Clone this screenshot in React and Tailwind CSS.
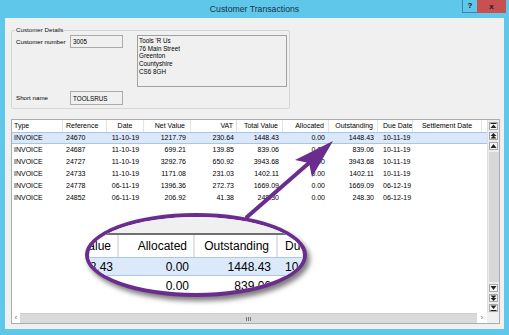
import React from "react";

const cols = [
    { label: "Type", cls: "w-[51px] pl-[2px] text-left" },
    { label: "Reference", cls: "w-[44px] pl-[3px] text-left" },
    { label: "Date", cls: "w-[37px] text-center" },
    { label: "Net Value", cls: "w-[47px] pr-[5px] text-right" },
    { label: "VAT", cls: "w-[46px] pr-[3px] text-right" },
    { label: "Total Value", cls: "w-[46px] pr-[4px] text-right" },
    { label: "Allocated", cls: "w-[46px] pr-[4px] text-right" },
    { label: "Outstanding", cls: "w-[49px] pr-[4px] text-right" },
    { label: "Due Date", cls: "w-[35px] pl-[5px] text-left" },
    { label: "Settlement Date", cls: "w-[69px] text-center" },
];

const rows = [
    ["INVOICE", "24670", "11-10-19", "1217.79", "230.64", "1448.43", "0.00", "1448.43", "10-11-19", ""],
    ["INVOICE", "24687", "11-10-19", "699.21", "139.85", "839.06", "0.00", "839.06", "10-11-19", ""],
    ["INVOICE", "24727", "11-10-19", "3292.76", "650.92", "3943.68", "0.00", "3943.68", "10-11-19", ""],
    ["INVOICE", "24733", "11-10-19", "1171.08", "231.03", "1402.11", "0.00", "1402.11", "10-11-19", ""],
    ["INVOICE", "24778", "06-11-19", "1396.36", "272.73", "1669.09", "0.00", "1669.09", "06-12-19", ""],
    ["INVOICE", "24852", "06-11-19", "206.92", "41.38", "248.30", "0.00", "248.30", "06-12-19", ""],
];

// scrollbar arrow glyphs
const Glyph = ({ kind }) => (
    <svg width="7" height="6" viewBox="0 0 7 6">
        {kind === "top" && (<><rect x="0.5" y="0" width="6" height="1" fill="#222" /><polygon points="3.5,1.5 6.5,5 0.5,5" fill="#222" /></>)}
        {kind === "pgup" && (<><polygon points="3.5,0 6.5,3 0.5,3" fill="#222" /><polygon points="3.5,2.5 6.5,5.5 0.5,5.5" fill="#222" /></>)}
        {kind === "up" && <polygon points="3.5,1 6.5,5 0.5,5" fill="#222" />}
        {kind === "down" && <polygon points="0.5,1 6.5,1 3.5,5" fill="#222" />}
        {kind === "pgdn" && (<><polygon points="0.5,0.5 6.5,0.5 3.5,3.5" fill="#222" /><polygon points="0.5,3 6.5,3 3.5,6" fill="#222" /></>)}
        {kind === "bottom" && (<><polygon points="0.5,0.5 6.5,0.5 3.5,4" fill="#222" /><rect x="0.5" y="5" width="6" height="1" fill="#222" /></>)}
    </svg>
);

const ScrollBtn = ({ kind }) => (
    <div className="w-[9px] h-[8px] border border-[#a8a8a8] bg-[#f4f4f4] flex items-center justify-center">
        <Glyph kind={kind} />
    </div>
);

const App = () => {
    return (
        <div className="w-[509px] h-[335px] bg-[#5fc7ea] relative overflow-hidden flex flex-col font-['Liberation_Sans',Arial,sans-serif] text-black">

            {/* Title bar */}
            <div className="h-[18px] grid grid-cols-[1fr_auto_1fr] shrink-0">
                <div />
                <div className="leading-[18px] text-[8.7px] text-[#1d3246]">Customer Transactions</div>
                <div className="flex justify-end items-start pr-[3px]">
                    <div className="w-[15px] h-[13px] border-l border-b border-[#3a86a8] flex items-center justify-center text-[8px] font-bold text-[#111]">?</div>
                    <div className="w-[29px] h-[13px] bg-[#c75050] flex items-center justify-center text-[8px] font-bold text-[#1a1a1a]">x</div>
                </div>
            </div>

            {/* Client area */}
            <div className="mx-[5px] h-[311px] bg-[#f0f0f0] flex flex-col pl-[6px] pr-[4px]">

                {/* Customer details group */}
                <fieldset className="mt-[8px] w-[279px] h-[83px] border border-[#d6d6d6] rounded-[2px]">
                    <legend className="ml-[3px] px-[1px] text-[6.2px] leading-[8px] text-[#111]">Customer Details</legend>
                    <div className="pl-[4px] pt-[1px] flex flex-col">
                        <div className="flex items-start">
                            <div className="flex items-center">
                                <span className="w-[54px] text-[6.2px]">Customer number</span>
                                <div className="w-[53px] h-[13px] border border-[#ababab] px-[2px] pt-[1px] text-[6.3px] leading-[10px]">3005</div>
                            </div>
                            <div className="ml-[14px] w-[150px] h-[52px] border border-[#a0a0a0] pl-[1px] pt-[1px] text-[6.3px] leading-[7.7px]">
                                <div>Tools 'R Us</div>
                                <div>76 Main Street</div>
                                <div>Greenton</div>
                                <div>Countyshire</div>
                                <div>CS6 8GH</div>
                            </div>
                        </div>
                        <div className="flex items-center mt-[4px]">
                            <span className="w-[54px] text-[6.2px]">Short name</span>
                            <div className="w-[53px] h-[14px] border border-[#ababab] px-[2px] pt-[1px] text-[6.3px] leading-[11px]">TOOLSRUS</div>
                        </div>
                    </div>
                </fieldset>

                {/* Transactions list */}
                <div className="mt-[10px] w-[489px] h-[205px] border border-[#adadad] bg-white flex flex-col text-[7px]">
                    <div className="flex flex-1 min-h-0">
                        <div className="flex-1 flex flex-col">
                            <div className="flex h-[12px]">
                                {cols.map((c) => (
                                    <div key={c.label} className={`${c.cls} shrink-0 h-full leading-[12px] whitespace-nowrap overflow-hidden border-r border-[#e3e3e3]`}>
                                        {c.label}
                                    </div>
                                ))}
                            </div>
                            {rows.map((r, i) => (
                                <div key={r[1]} className={`flex h-[12px] ${i === 0 ? "bg-[#dbe8fa] border-y border-[#a6c4ec]" : ""}`}>
                                    {cols.map((c, j) => (
                                        <div key={c.label} className={`${c.cls} shrink-0 whitespace-nowrap overflow-hidden ${i === 0 ? "leading-[10px]" : "leading-[12px]"}`}>
                                            {r[j]}
                                        </div>
                                    ))}
                                </div>
                            ))}
                        </div>

                        {/* Vertical scrollbar */}
                        <div className="w-[12px] bg-[#ececec] border-l border-[#dddddd] flex flex-col items-center">
                            <div className="pt-[2px] flex flex-col gap-[2px]">
                                <ScrollBtn kind="top" />
                                <ScrollBtn kind="pgup" />
                                <ScrollBtn kind="up" />
                            </div>
                            <div className="flex-1 w-[10px] bg-[#d8d8d8] my-[2px]" />
                            <div className="pb-[1px] flex flex-col gap-[2px]">
                                <ScrollBtn kind="down" />
                                <ScrollBtn kind="pgdn" />
                                <ScrollBtn kind="bottom" />
                            </div>
                        </div>
                    </div>

                    {/* Horizontal scrollbar */}
                    <div className="flex h-[10px]">
                        <div className="w-[8px] bg-white flex items-center justify-center text-[7px] text-[#555]">‹</div>
                        <div className="flex-1 bg-[#dadada] border-t border-[#cdcdcd] flex items-center justify-center">
                            <div className="flex gap-[1px]">
                                <div className="w-[1px] h-[4px] bg-[#777]" />
                                <div className="w-[1px] h-[4px] bg-[#777]" />
                                <div className="w-[1px] h-[4px] bg-[#777]" />
                            </div>
                        </div>
                        <div className="w-[10px] bg-white flex items-center justify-center text-[7px] text-[#555]">›</div>
                        <div className="w-[12px] bg-[#f0f0f0]" />
                    </div>
                </div>
            </div>

            {/* Magnifier callout */}
            <div className="absolute left-[85px] top-[213px] w-[222px] h-[84px] rounded-[50%] border-4 border-[#6a2c8e] overflow-hidden bg-white shadow-[3px_4px_5px_rgba(0,0,0,0.5)] text-[12px]">
                <div className="h-[18px] bg-[#f0f0f0] border-b-2 border-[#707070]" />
                <div className="flex h-[22px]">
                    <div className="w-[30px] shrink-0 flex justify-end items-center pr-[6px] border-r-2 border-[#e3e3e3] whitespace-nowrap">Total Value</div>
                    <div className="w-[76px] shrink-0 flex justify-end items-center pr-[6px] border-r-2 border-[#e3e3e3]">Allocated</div>
                    <div className="w-[83px] shrink-0 flex justify-end items-center pr-[7px] border-r-2 border-[#e3e3e3]">Outstanding</div>
                    <div className="shrink-0 flex items-center pl-[7px] whitespace-nowrap">Due Date</div>
                </div>
                <div className="flex h-[19px] bg-[#dbe9fb] border-y border-[#a9c6ee]">
                    <div className="w-[30px] shrink-0 flex justify-end items-center pr-[6px] whitespace-nowrap">1448.43</div>
                    <div className="w-[76px] shrink-0 flex justify-end items-center pr-[6px]">0.00</div>
                    <div className="w-[83px] shrink-0 flex justify-end items-center pr-[7px]">1448.43</div>
                    <div className="shrink-0 flex items-center pl-[7px] whitespace-nowrap">10-11-19</div>
                </div>
                <div className="flex h-[20px]">
                    <div className="w-[30px] shrink-0 flex justify-end items-center pr-[6px] whitespace-nowrap">839.06</div>
                    <div className="w-[76px] shrink-0 flex justify-end items-center pr-[6px]">0.00</div>
                    <div className="w-[83px] shrink-0 flex justify-end items-center pr-[7px]">839.06</div>
                    <div className="shrink-0 flex items-center pl-[7px] whitespace-nowrap">10-11-19</div>
                </div>
            </div>

            {/* Callout arrow */}
            <svg className="absolute left-0 top-0 pointer-events-none" width="509" height="335" viewBox="0 0 509 335">
                <line x1="247" y1="217" x2="309" y2="163" stroke="#6a2c8e" strokeWidth="4" strokeLinecap="round" />
                <polygon points="333,141 295,160 309,163 312,177" fill="#6a2c8e" />
            </svg>
        </div>
    );
};

export default App;
